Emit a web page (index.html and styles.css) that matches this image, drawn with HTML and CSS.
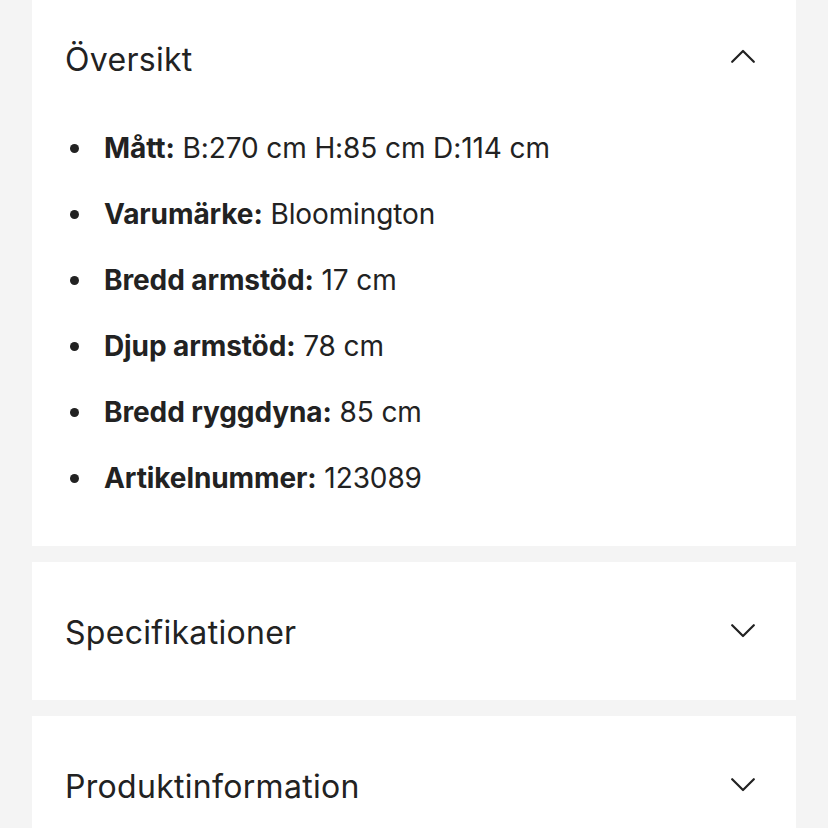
FILE: index.html
```html
<!DOCTYPE html>
<html lang="sv">
<head>
<meta charset="utf-8">
<link rel="stylesheet" href="styles.css">
</head>
<body>
<div class="page">
  <section class="card open">
    <div class="card-head">
      <h2 class="card-title">Översikt</h2>
      <svg class="chev up" viewBox="0 0 24 14" width="24" height="14"><path d="M1.2 12.8 L12 2 L22.8 12.8" fill="none" stroke="#222" stroke-width="2.2" stroke-linecap="round" stroke-linejoin="round"/></svg>
    </div>
    <ul class="facts">
      <li><b>Mått:</b> B:270 cm H:85 cm D:114 cm</li>
      <li><b>Varumärke:</b> Bloomington</li>
      <li><b>Bredd armstöd:</b> 17 cm</li>
      <li><b>Djup armstöd:</b> 78 cm</li>
      <li><b>Bredd ryggdyna:</b> 85 cm</li>
      <li><b>Artikelnummer:</b> 123089</li>
    </ul>
  </section>
  <section class="card">
    <div class="card-head">
      <h2 class="card-title">Specifikationer</h2>
      <svg class="chev" viewBox="0 0 24 14" width="24" height="14"><path d="M1.2 1.2 L12 12 L22.8 1.2" fill="none" stroke="#222" stroke-width="2.2" stroke-linecap="round" stroke-linejoin="round"/></svg>
    </div>
  </section>
  <section class="card">
    <div class="card-head">
      <h2 class="card-title">Produktinformation</h2>
      <svg class="chev" viewBox="0 0 24 14" width="24" height="14"><path d="M1.2 1.2 L12 12 L22.8 1.2" fill="none" stroke="#222" stroke-width="2.2" stroke-linecap="round" stroke-linejoin="round"/></svg>
    </div>
  </section>
</div>
</body>
</html>
```
FILE: styles.css
```css
* { box-sizing: border-box; }
html, body { margin: 0; padding: 0; }
body {
  background: #f4f4f4;
  font-family: Inter, "Noto Sans", sans-serif;
  color: #222;
  overflow: hidden;
}
.page {
  margin: -11px 32px 0;
  display: flex;
  flex-direction: column;
  gap: 16px;
}
.card {
  background: #fff;
  padding: 0 41px 0 33px;
}
.card.open { padding-bottom: 35px; }
.card-head {
  display: flex;
  align-items: center;
  justify-content: space-between;
  padding: 52px 0;
}
.card-title {
  margin: 0;
  padding-top: 4px;
  font-size: 32px;
  font-weight: 400;
  line-height: 30px;
  letter-spacing: 0.3px;
}
.chev { display: block; }
.chev.up { margin-top: -5px; }
.facts {
  list-style: none;
  margin: -12px 0 0;
  padding: 0;
}
.facts li {
  position: relative;
  padding-left: 39px;
  font-size: 28px;
  line-height: 66px;
  letter-spacing: -0.1px;
}
.facts li::before {
  content: "";
  position: absolute;
  left: 5px;
  top: 29px;
  width: 9px;
  height: 9px;
  border-radius: 50%;
  background: #222;
}
.facts b { font-weight: 700; }
```
